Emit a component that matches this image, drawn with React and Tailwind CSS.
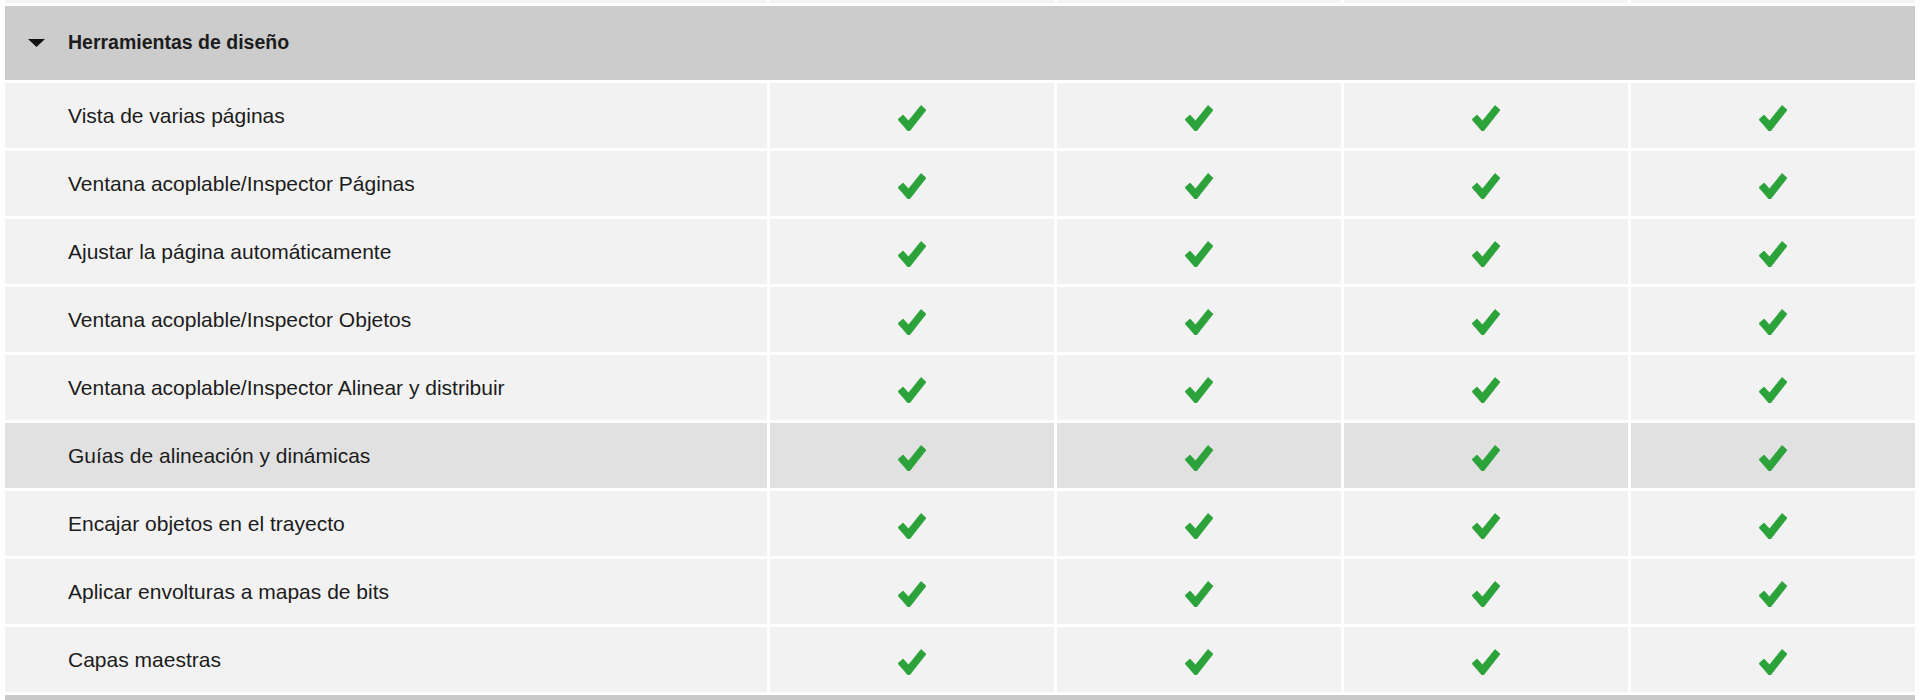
const features = [
  'Vista de varias páginas',
  'Ventana acoplable/Inspector Páginas',
  'Ajustar la página automáticamente',
  'Ventana acoplable/Inspector Objetos',
  'Ventana acoplable/Inspector Alinear y distribuir',
  'Guías de alineación y dinámicas',
  'Encajar objetos en el trayecto',
  'Aplicar envolturas a mapas de bits',
  'Capas maestras',
];

const HOVER_ROW = 5;

function Check() {
  return (
    <svg width="28" height="26" viewBox="0 0 28 26" className="mt-[5px]">
      <polygon
        points="0,14.5 5,10 10.5,16 23,0.5 28,5 11.5,26 10,26"
        fill="#2ba33a"
        strokeLinejoin="round"
        stroke="#2ba33a"
        strokeWidth="0.8"
      />
    </svg>
  );
}

function Row({ label, hover }) {
  const bg = hover ? 'bg-[#e1e1e1]' : 'bg-[#f2f2f2]';
  return (
    <div className="grid grid-cols-[762px_repeat(4,minmax(0,1fr))] gap-x-[3px] h-[65px]">
      <div className={`${bg} flex items-center pl-[63px] text-[21px] text-[#1c1c1c]`}>
        {label}
      </div>
      {[0, 1, 2, 3].map((i) => (
        <div key={i} className={`${bg} flex items-center justify-center`}>
          <Check />
        </div>
      ))}
    </div>
  );
}

export default function App() {
  return (
    <div
      className="w-full h-[700px] bg-white px-[5px] overflow-hidden"
      style={{ fontFamily: '"Liberation Sans", Arial, sans-serif' }}
    >
      <div className="flex flex-col gap-[3px]">
        {/* tail of the previous row */}
        <div className="grid grid-cols-[762px_repeat(4,minmax(0,1fr))] gap-x-[3px] h-[3px]">
          {[0, 1, 2, 3, 4].map((i) => (
            <div key={i} className="bg-[#f4f4f4]" />
          ))}
        </div>

        {/* category header */}
        <div className="h-[74px] bg-[#cccccc] flex items-center">
          <svg width="17" height="8" viewBox="0 0 17 8" className="ml-[23px] mr-[23px]">
            <polygon points="0,0 17,0 8.5,8" fill="#111" />
          </svg>
          <span className="text-[19.5px] font-bold text-[#1c1c1c]">Herramientas de diseño</span>
        </div>

        {features.map((f, i) => (
          <Row key={f} label={f} hover={i === HOVER_ROW} />
        ))}

        {/* next category header, cut off */}
        <div className="h-[20px] bg-[#c9c9c9]" />
      </div>
    </div>
  );
}
